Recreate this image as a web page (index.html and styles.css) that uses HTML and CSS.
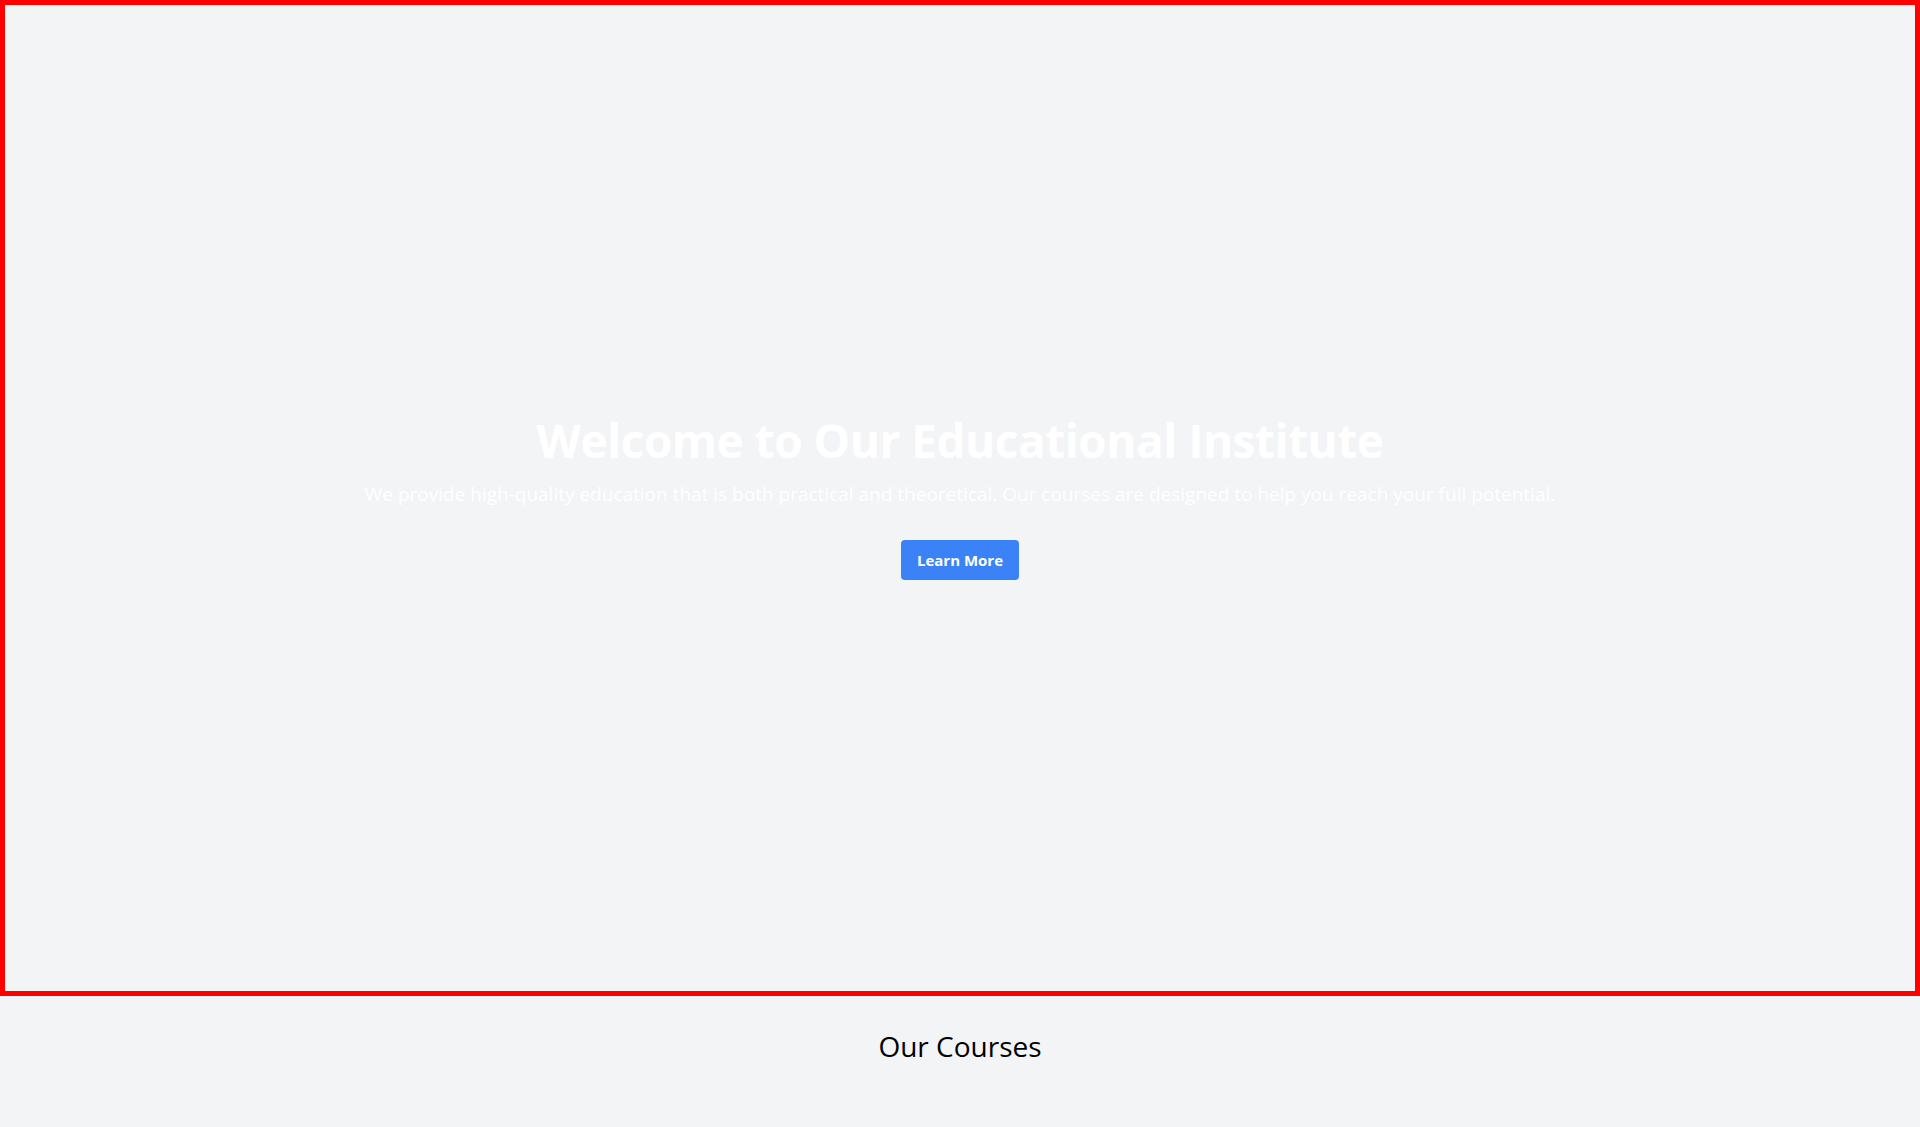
FILE: index.html
```html
<!DOCTYPE html>
<html lang="en">
<head>
<meta charset="utf-8">
<title>Educational Institute</title>
<link rel="stylesheet" href="styles.css">
</head>
<body>
<section class="hero">
  <h1 class="hero-title">Welcome to Our Educational Institute</h1>
  <p class="hero-text">We provide high-quality education that is both practical and theoretical. Our courses are designed to help you reach your full potential.</p>
  <a class="hero-button" href="#courses">Learn More</a>
</section>
<section class="courses" id="courses">
  <h2 class="courses-title">Our Courses</h2>
</section>
</body>
</html>
```

FILE: styles.css
```css
html, body {
  margin: 0;
  padding: 0;
}
body {
  background: #f3f4f6;
  font-family: "Open Sans", "Noto Sans", "Liberation Sans", sans-serif;
  color: #000;
}
.hero {
  box-sizing: border-box;
  height: 996px;
  border: 5px solid #ff0000;
  display: flex;
  flex-direction: column;
  align-items: center;
  justify-content: center;
  text-align: center;
  color: #ffffff;
}
.hero-title {
  margin: 0 0 16px;
  font-size: 46px;
  line-height: 48px;
  letter-spacing: -0.5px;
  font-weight: 700;
}
.hero-text {
  margin: 0 0 32px;
  font-size: 19px;
  line-height: 28px;
}
.hero-button {
  display: inline-block;
  background: #3b82f6;
  color: #ffffff;
  font-weight: 700;
  font-size: 15px;
  line-height: 24px;
  padding: 8px 16px;
  border-radius: 4px;
  text-decoration: none;
}
.courses {
  padding: 32px 16px;
  text-align: center;
}
.courses-title {
  margin: 0;
  font-size: 28px;
  line-height: 36px;
  font-weight: 400;
}
```
